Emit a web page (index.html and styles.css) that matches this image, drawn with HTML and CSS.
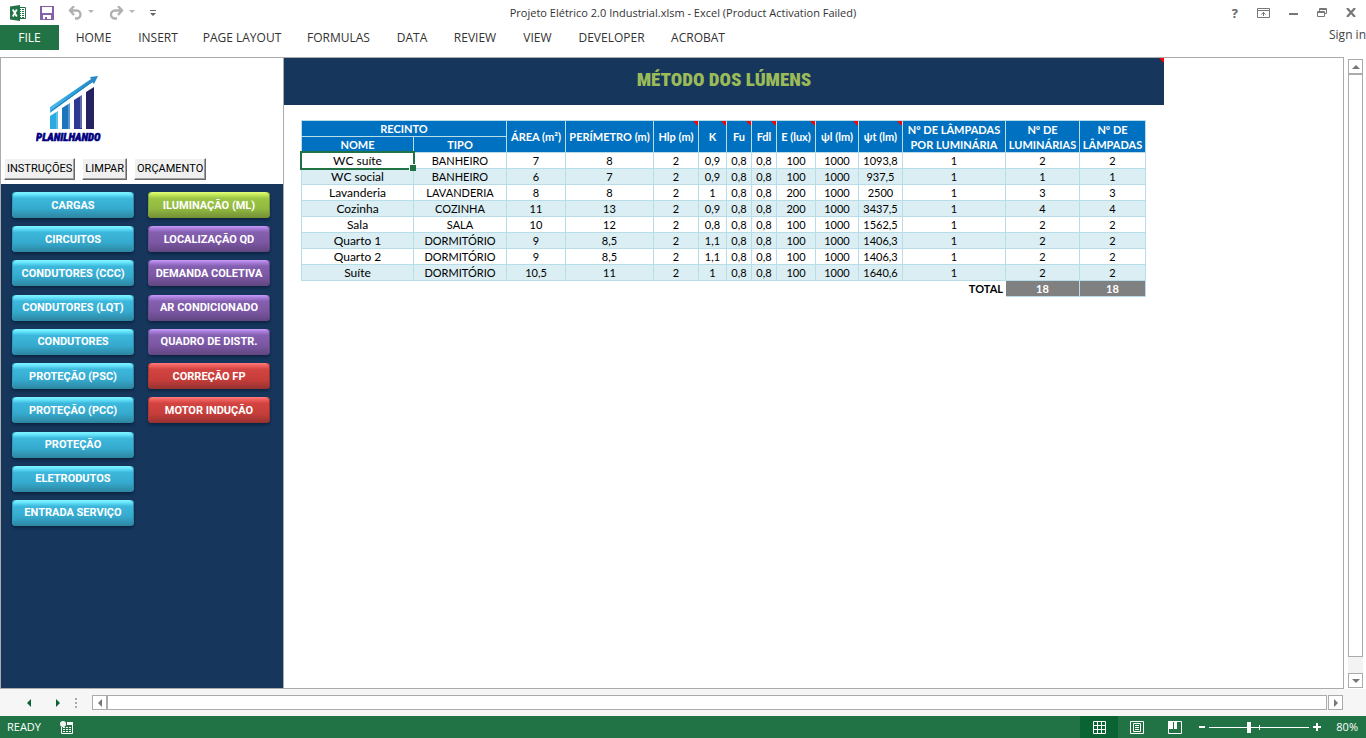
FILE: index.html
```html
<!DOCTYPE html>
<html lang="pt-BR">
<head>
<meta charset="utf-8">
<meta name="viewport" content="width=device-width, initial-scale=1">
<title>Projeto Elétrico 2.0 Industrial.xlsm - Excel</title>
<link rel="stylesheet" href="styles.css">
</head>
<body>
<div class="app">
  <header class="titlebar">
    <div class="quick">
      <svg class="ic-excel" width="16" height="16" viewBox="0 0 16 16" aria-hidden="true"><path fill="#fff" stroke="#217346" d="M8.500 2.500h7v11h-7z"/><path stroke="#217346" stroke-width="1" d="M9 4.500h5M9 6.500h5M9 8.500h5M9 10.500h5M9 12.500h5"/><path stroke="#fff" d="M11.500 3v10"/><path fill="#217346" d="M0 1.500 10 0v16L0 14.500z"/><path stroke="#fff" stroke-width="1.800" d="m2.800 4.500 4 7M6.800 4.500l-4 7"/></svg>
      <button class="qbtn" type="button" aria-label="Save"><svg width="14" height="14" viewBox="0 0 14 14"><path fill="#8560a8" d="M0 0h14v14H0z"/><path fill="#fff" d="M2 1h10v6H2zM3 9h8v4H3z"/><path fill="#8560a8" d="M5 11h2v2H5z"/></svg></button>
      <button class="qbtn" type="button" aria-label="Undo"><svg width="27" height="14" viewBox="0 0 27 14"><path d="M6 0 2 4.500 6 9M2 4.500h6.500a4 4 0 0 1 0 8H7" fill="none" stroke="#b0b0b0" stroke-width="2.400"/><path fill="#b4b4b4" d="M20 4h6l-3 3z"/></svg></button>
      <button class="qbtn" type="button" aria-label="Redo"><svg width="27" height="14" viewBox="0 0 27 14"><path d="M9 0l4 4.500L9 9M13 4.500H6a4 4 0 0 0 0 8h2" fill="none" stroke="#b0b0b0" stroke-width="2.400"/><path fill="#b4b4b4" d="M20 4h6l-3 3z"/></svg></button>
      <button class="qbtn" type="button" aria-label="Customize Quick Access Toolbar"><svg width="6" height="6" viewBox="0 0 6 6"><path fill="#666" d="M0 0h6v1H0zM0 3h6L3 6z"/></svg></button>
    </div>
    <div class="doc-title">Projeto Elétrico 2.0 Industrial.xlsm - Excel (Product Activation Failed)</div>
    <div class="winctl">
      <button class="help" type="button" aria-label="Help">?</button>
      <button type="button" aria-label="Ribbon Display Options"><svg width="13" height="10" viewBox="0 0 13 10"><path fill="none" stroke="#777" d="M.5.500h12v9H.5zM1 2.500h11M6.500 4v4M4.500 6.500l2-2 2 2"/></svg></button>
      <button type="button" aria-label="Minimize"><svg width="9" height="10" viewBox="0 0 9 10"><path fill="#777" d="M0 5h9v2H0z"/></svg></button>
      <button type="button" aria-label="Restore"><svg width="10" height="9" viewBox="0 0 10 9"><path fill="none" stroke="#777" d="M2.500 3V.5h7v5H7M2.500 1.500h7M.5 3.500h7v5h-7zM.5 4.500h7"/></svg></button>
      <button type="button" aria-label="Close"><svg width="10" height="9" viewBox="0 0 10 9"><path stroke="#777" stroke-width="2.200" d="m1 0 8 9M9 0 1 9"/></svg></button>
    </div>
  </header>

  <nav class="ribbon" aria-label="Ribbon">
    <button class="tab file" type="button">FILE</button>
    <button class="tab" type="button">HOME</button>
    <button class="tab" type="button">INSERT</button>
    <button class="tab" type="button">PAGE LAYOUT</button>
    <button class="tab" type="button">FORMULAS</button>
    <button class="tab" type="button">DATA</button>
    <button class="tab" type="button">REVIEW</button>
    <button class="tab" type="button">VIEW</button>
    <button class="tab" type="button">DEVELOPER</button>
    <button class="tab" type="button">ACROBAT</button>
    <a class="signin" href="#">Sign in</a>
  </nav>

  <main class="work">
    <div class="panes">
      <aside class="side">
        <div class="brand">
          <svg class="logo" width="78" height="70" viewBox="0 0 78 70" role="img" aria-label="Planilhando">
            <defs><linearGradient id="arrow" x1="0" x2="1"><stop offset="0" stop-color="#4fb8ea"/><stop offset=".5" stop-color="#28a0dc"/><stop offset="1" stop-color="#2b86c0"/></linearGradient></defs>
            <path fill="#29abe2" d="M14 41l8-5v18h-8z"/>
            <path fill="#1c75bc" d="M26 33l8-5v26h-8z"/>
            <path fill="#2b3990" d="M38 25l8-5v34h-8z"/>
            <path fill="#262262" d="M50 17l8-5v42h-8z"/>
            <path fill="#fff" opacity=".25" d="M20 37l2-1v18h-2zM32 29l2-1v26h-2zM44 21l2-1v33h-2z"/>
            <path fill="url(#arrow)" d="M14 32 55 4l-1-2 8-1-4 8-2-2L14 38z"/>
            <path stroke="#1b7cb8" stroke-width="1" fill="none" d="M15 36 56 7"/>
            <text class="logo-text" x="0" y="66">PLANILHANDO</text>
          </svg>
          <div class="actions">
            <button type="button">INSTRUÇÕES</button>
            <button type="button">LIMPAR</button>
            <button type="button">ORÇAMENTO</button>
          </div>
        </div>
        <div class="menu">
          <button class="pill cyan" type="button">CARGAS</button>
          <button class="pill cyan" type="button">CIRCUITOS</button>
          <button class="pill cyan" type="button">CONDUTORES (CCC)</button>
          <button class="pill cyan" type="button">CONDUTORES (LQT)</button>
          <button class="pill cyan" type="button">CONDUTORES</button>
          <button class="pill cyan" type="button">PROTEÇÃO (PSC)</button>
          <button class="pill cyan" type="button">PROTEÇÃO (PCC)</button>
          <button class="pill cyan" type="button">PROTEÇÃO</button>
          <button class="pill cyan" type="button">ELETRODUTOS</button>
          <button class="pill cyan" type="button">ENTRADA SERVIÇO</button>
          <button class="pill green" type="button">ILUMINAÇÃO (ML)</button>
          <button class="pill purple" type="button">LOCALIZAÇÃO QD</button>
          <button class="pill purple" type="button">DEMANDA COLETIVA</button>
          <button class="pill purple" type="button">AR CONDICIONADO</button>
          <button class="pill purple" type="button">QUADRO DE DISTR.</button>
          <button class="pill red" type="button">CORREÇÃO FP</button>
          <button class="pill red" type="button">MOTOR INDUÇÃO</button>
        </div>
      </aside>

      <section class="sheet">
        <h1 class="banner note">MÉTODO DOS LÚMENS</h1>
        <table class="grid">
          <colgroup><col class="c-nome"><col class="c-tipo"><col class="c-area"><col class="c-per"><col class="c-hlp"><col class="c-k"><col class="c-f"><col class="c-f"><col class="c-e"><col class="c-pl"><col class="c-pt"><col class="c-por"><col class="c-lum"><col class="c-lam"></colgroup>
          <thead>
            <tr><th colspan="2">RECINTO</th><th rowspan="2">ÁREA (m²)</th><th rowspan="2">PERÍMETRO (m)</th><th rowspan="2" class="note">Hlp (m)</th><th rowspan="2" class="note">K</th><th rowspan="2" class="note">Fu</th><th rowspan="2" class="note">Fdl</th><th rowspan="2" class="note">E (lux)</th><th rowspan="2" class="note">ψl (lm)</th><th rowspan="2" class="note">ψt (lm)</th><th rowspan="2">Nº DE LÂMPADAS<br>POR LUMINÁRIA</th><th rowspan="2">Nº DE<br>LUMINÁRIAS</th><th rowspan="2">Nº DE<br>LÂMPADAS</th></tr>
            <tr><th>NOME</th><th>TIPO</th></tr>
          </thead>
          <tbody>
            <tr><td class="selected">WC suíte</td><td>BANHEIRO</td><td>7</td><td>8</td><td>2</td><td>0,9</td><td>0,8</td><td>0,8</td><td>100</td><td>1000</td><td>1093,8</td><td>1</td><td>2</td><td>2</td></tr>
            <tr><td>WC social</td><td>BANHEIRO</td><td>6</td><td>7</td><td>2</td><td>0,9</td><td>0,8</td><td>0,8</td><td>100</td><td>1000</td><td>937,5</td><td>1</td><td>1</td><td>1</td></tr>
            <tr><td>Lavanderia</td><td>LAVANDERIA</td><td>8</td><td>8</td><td>2</td><td>1</td><td>0,8</td><td>0,8</td><td>200</td><td>1000</td><td>2500</td><td>1</td><td>3</td><td>3</td></tr>
            <tr><td>Cozinha</td><td>COZINHA</td><td>11</td><td>13</td><td>2</td><td>0,9</td><td>0,8</td><td>0,8</td><td>200</td><td>1000</td><td>3437,5</td><td>1</td><td>4</td><td>4</td></tr>
            <tr><td>Sala</td><td>SALA</td><td>10</td><td>12</td><td>2</td><td>0,8</td><td>0,8</td><td>0,8</td><td>100</td><td>1000</td><td>1562,5</td><td>1</td><td>2</td><td>2</td></tr>
            <tr><td>Quarto 1</td><td>DORMITÓRIO</td><td>9</td><td>8,5</td><td>2</td><td>1,1</td><td>0,8</td><td>0,8</td><td>100</td><td>1000</td><td>1406,3</td><td>1</td><td>2</td><td>2</td></tr>
            <tr><td>Quarto 2</td><td>DORMITÓRIO</td><td>9</td><td>8,5</td><td>2</td><td>1,1</td><td>0,8</td><td>0,8</td><td>100</td><td>1000</td><td>1406,3</td><td>1</td><td>2</td><td>2</td></tr>
            <tr><td>Suíte</td><td>DORMITÓRIO</td><td>10,5</td><td>11</td><td>2</td><td>1</td><td>0,8</td><td>0,8</td><td>100</td><td>1000</td><td>1640,6</td><td>1</td><td>2</td><td>2</td></tr>
          </tbody>
          <tfoot>
            <tr><th class="total-label" colspan="12">TOTAL</th><td>18</td><td>18</td></tr>
          </tfoot>
        </table>
      </section>
    </div>
    <div class="vscroll">
      <button class="sbtn" type="button" aria-label="Scroll up"><svg width="8" height="4" viewBox="0 0 8 4"><path fill="#777" d="M0 4l4-4 4 4z"/></svg></button>
      <div class="vthumb"></div>
      <div class="vtrack"></div>
      <button class="sbtn" type="button" aria-label="Scroll down"><svg width="8" height="4" viewBox="0 0 8 4"><path fill="#777" d="M0 0l4 4 4-4z"/></svg></button>
    </div>
  </main>

  <div class="tabstrip">
    <div class="sheetnav">
      <button type="button" aria-label="Previous sheet"><svg width="4" height="8" viewBox="0 0 4 8"><path fill="#0a6332" d="M4 0v8L0 4z"/></svg></button>
      <button type="button" aria-label="Next sheet"><svg width="4" height="8" viewBox="0 0 4 8"><path fill="#0a6332" d="M0 0v8l4-4z"/></svg></button>
      <svg width="2" height="10" viewBox="0 0 2 10" aria-hidden="true"><path fill="#ababab" d="M0 0h2v2H0zM0 4h2v2H0zM0 8h2v2H0z"/></svg>
    </div>
    <div class="hscroll">
      <button class="sbtn" type="button" aria-label="Scroll left"><svg width="4" height="8" viewBox="0 0 4 8"><path fill="#777" d="M4 0v8L0 4z"/></svg></button>
      <div class="hthumb"></div>
      <button class="sbtn" type="button" aria-label="Scroll right"><svg width="4" height="8" viewBox="0 0 4 8"><path fill="#777" d="M0 0v8l4-4z"/></svg></button>
    </div>
  </div>

  <footer class="status">
    <span class="ready">READY</span>
    <button class="macro" type="button" aria-label="Record macro"><svg width="13" height="13" viewBox="0 0 13 13"><path fill="none" stroke="#fff" d="M1.500 6v6.500h11V1.500H7"/><path fill="#fff" d="M7 1h6v3H7zM3 6h2v1H3zM6 6h2v1H6zM9 6h2v1H9zM3 8h2v1H3zM6 8h2v1H6zM9 8h2v1H9zM3 10h2v1H3zM6 10h2v1H6zM9 10h2v1H9z"/><circle fill="#eef4f0" cx="3" cy="3" r="3"/></svg></button>
    <div class="views">
      <button class="view active" type="button" aria-label="Normal"><svg width="13" height="13" viewBox="0 0 13 13"><path fill="none" stroke="#fff" d="M.5.500h12v12H.5zM4.500 0v13M8.500 0v13M0 4.500h13M0 8.500h13"/></svg></button>
      <button class="view" type="button" aria-label="Page Layout"><svg width="14" height="13" viewBox="0 0 14 13"><path fill="none" stroke="#fff" d="M.5.500h13v12H.5zM3.500 2.500h7v8h-7zM5 4.500h4M5 6.500h4M5 8.500h4"/></svg></button>
      <button class="view" type="button" aria-label="Page Break Preview"><svg width="14" height="13" viewBox="0 0 14 13"><path fill="none" stroke="#fff" d="M.5.500h13v12H.5z"/><path fill="#fff" d="M0 0h5v8H0zM6 0h3v8H6z"/></svg></button>
    </div>
    <div class="zoom">
      <button type="button" aria-label="Zoom out"><svg width="8" height="8" viewBox="0 0 8 8"><path fill="#fff" d="M1 3h6v2H1z"/></svg></button>
      <span class="range"><input type="range" min="0" max="100" value="40" aria-label="Zoom"></span>
      <button type="button" aria-label="Zoom in"><svg width="8" height="8" viewBox="0 0 8 8"><path fill="#fff" d="M0 3h8v2H0zM3 0h2v8H3z"/></svg></button>
      <span class="pct">80%</span>
    </div>
  </footer>
</div>
</body>
</html>
```

FILE: styles.css
```css
* { box-sizing: border-box; }

body {
  margin: 0;
  background: #fff;
  color: #444;
  font: 12px/16px "Open Sans", "Noto Sans", sans-serif;
}

button {
  margin: 0;
  padding: 0;
  border: 0;
  background: none;
  color: inherit;
  font: inherit;
}

svg { display: block; }

.app {
  display: flex;
  flex-direction: column;
  min-height: 100vh;
}

/* Title bar */
.titlebar {
  display: grid;
  grid-template-columns: 1fr auto 1fr;
  align-items: center;
  height: 25px;
}
.quick {
  display: flex;
  align-items: center;
  gap: 14px;
  padding-left: 10px;
}
.doc-title {
  font-size: 11px;
  color: #333;
}
.winctl {
  display: flex;
  justify-content: flex-end;
  align-items: center;
  gap: 19px;
  padding-right: 10px;
}
.help {
  font-weight: 700;
  font-size: 13px;
  color: #666;
}

/* Ribbon tabs */
.ribbon {
  display: grid;
  grid-template-columns: 59px 69px 60px 108px 85px 62px 64px 61px 87px 86px 1fr;
  height: 32px;
}
.tab {
  height: 25px;
  color: #333;
  white-space: nowrap;
}
.tab.file {
  background: #217346;
  color: #fff;
}
.signin {
  padding-top: 2px;
  color: #444;
  text-align: right;
  text-decoration: none;
}

/* Workspace */
.work {
  flex: 1;
  display: flex;
  gap: 4px;
  padding-right: 3px;
}
.panes {
  flex: 1;
  display: flex;
  border: 1px solid #ababab;
}
.side {
  display: flex;
  flex-direction: column;
  width: 283px;
  border-right: 1px solid #ababab;
  background: #16365c;
}
.brand {
  display: flex;
  flex-direction: column;
  justify-content: space-between;
  height: 126px;
  padding: 17px 3px 4px;
  background: #fff;
}
.logo { margin-left: 32px; }
.logo-text {
  fill: #000080;
  stroke: #000080;
  stroke-width: 0.5px;
  font: italic 900 11px "Roboto Condensed", Roboto, sans-serif;
}
.actions {
  display: flex;
  gap: 7px;
}
.actions button {
  height: 22px;
  padding: 0 2px;
  border: 1px solid;
  border-color: #fff #696969 #696969 #fff;
  box-shadow: inset -1px -1px #a0a0a0;
  background: #f0f0f0;
  color: #000;
  font: 11px/16px Roboto, sans-serif;
}
.menu {
  display: grid;
  grid-template-rows: repeat(10, 26px);
  grid-auto-columns: 122px;
  grid-auto-flow: column;
  column-gap: 14px;
  align-content: space-between;
  height: 350px;
  padding: 8px 11px;
}
.pill {
  padding-top: 1px;
  border-radius: 4px;
  color: #fff;
  font: 700 11px/16px Roboto, sans-serif;
  white-space: nowrap;
}
.cyan {
  background: linear-gradient(#7ff4ff, #6ceaff 8%, #3cb8dc 24%, #35a9cd 65%, #2d859f);
  box-shadow: inset 1px 0 #2f9dbb, inset -1px 0 #2f8ba6, 0 2px 3px #0b2340;
}
.green {
  background: linear-gradient(#e4ff80, #cdf060 8%, #9cc645 24%, #90b840 65%, #748f35);
  box-shadow: inset 1px 0 #82a43a, inset -1px 0 #748f35, 0 2px 3px #0b2340;
}
.purple {
  background: linear-gradient(#c99cff, #ae82e0 8%, #8460b0 24%, #7a56a2 65%, #614680);
  box-shadow: inset 1px 0 #6d4f92, inset -1px 0 #614680, 0 2px 3px #0b2340;
}
.red {
  background: linear-gradient(#ff8080, #f46462 8%, #d24441 24%, #c63d3a 65%, #943230);
  box-shadow: inset 1px 0 #a93936, inset -1px 0 #943230, 0 2px 3px #0b2340;
}

/* Worksheet */
.sheet {
  flex: 1;
  min-width: 0;
}
.banner {
  width: 880px;
  height: 47px;
  margin: 0;
  background: #16365c;
  color: #9bbb59;
  font: 900 19px/44px Impact, "Roboto Condensed", Roboto, sans-serif;
  text-align: center;
}
.note { position: relative; }
.note::after {
  content: "";
  position: absolute;
  top: 0;
  right: 0;
  border-top: 5px solid #f00;
  border-left: 5px solid transparent;
}
.grid {
  width: 845px;
  margin: 15px 0 0 17px;
  border-collapse: collapse;
  table-layout: fixed;
  color: #000;
  font: 11px/15px Lato, sans-serif;
  text-align: center;
}
.grid th,
.grid td {
  height: 16px;
  padding: 0;
  border: 1px solid #b7dee8;
  white-space: nowrap;
}
.grid thead th {
  background: #0070c0;
  color: #fff;
}
.grid tbody td:first-child { font-size: 12px; }
.grid tbody tr:nth-child(even) { background: #daeef3; }
.grid tfoot td {
  background: #808080;
  color: #fff;
  font-weight: 700;
}
.grid .total-label {
  padding-right: 2px;
  border-color: #b7dee8 transparent transparent;
  text-align: right;
}
.c-nome { width: 112px; }
.c-tipo { width: 93px; }
.c-area { width: 59px; }
.c-per { width: 88px; }
.c-hlp { width: 45px; }
.c-k { width: 28px; }
.c-f { width: 25px; }
.c-e { width: 39px; }
.c-pl { width: 43px; }
.c-pt { width: 44px; }
.c-por { width: 103px; }
.c-lum { width: 74px; }
.c-lam { width: 66px; }
.selected { position: relative; }
.selected::before {
  content: "";
  position: absolute;
  inset: -2px;
  border: 2px solid #217346;
}
.selected::after {
  content: "";
  position: absolute;
  right: -3px;
  bottom: -3px;
  width: 6px;
  height: 6px;
  border: solid #fff;
  border-width: 1px 0 0 1px;
  background: #217346;
}

/* Scroll bars */
.sbtn {
  display: grid;
  place-items: center;
  flex: none;
  width: 15px;
  height: 15px;
  border: 1px solid #ababab;
  background: #fff;
}
.vscroll {
  display: flex;
  flex-direction: column;
  width: 15px;
  padding: 2px 0 1px;
}
.vthumb {
  flex: 1;
  border: 1px solid #ababab;
  background: #fff;
}
.vtrack {
  height: 16px;
  background: #f3f3f3;
}
.tabstrip {
  display: flex;
  align-items: center;
  height: 27px;
  padding-right: 23px;
  background: #f6f6f6;
}
.sheetnav {
  display: flex;
  align-items: center;
  width: 92px;
  padding-left: 27px;
}
.sheetnav button { margin-right: 25px; }
.sheetnav button + button { margin-right: 15px; }
.hscroll {
  flex: 1;
  display: flex;
}
.hthumb {
  flex: 1;
  margin-right: 1px;
  border: 1px solid #ababab;
  background: #fff;
}

/* Status bar */
.status {
  display: flex;
  align-items: center;
  height: 22px;
  padding: 0 8px 0 7px;
  background: #217346;
  color: #fff;
  font-size: 11px;
}
.macro { margin-left: 19px; }
.views {
  display: flex;
  margin-left: auto;
}
.view {
  display: grid;
  place-items: center;
  width: 38px;
  height: 22px;
}
.view.active { background: #0a6332; }
.zoom {
  display: flex;
  align-items: center;
  margin-left: 4px;
}
.range {
  display: flex;
  width: 100px;
  margin: 0 4px 0 3px;
  background: linear-gradient(#fff, #fff) 50px 50% / 1px 5px no-repeat;
}
.range input {
  width: 100%;
  height: 12px;
  margin: 0;
  appearance: none;
  background: linear-gradient(#fff, #fff) 0 50% / 100% 1px no-repeat;
}
.range input::-webkit-slider-thumb {
  appearance: none;
  width: 4px;
  height: 11px;
  background: #fff;
}
.pct {
  width: 37px;
  text-align: right;
}
```
